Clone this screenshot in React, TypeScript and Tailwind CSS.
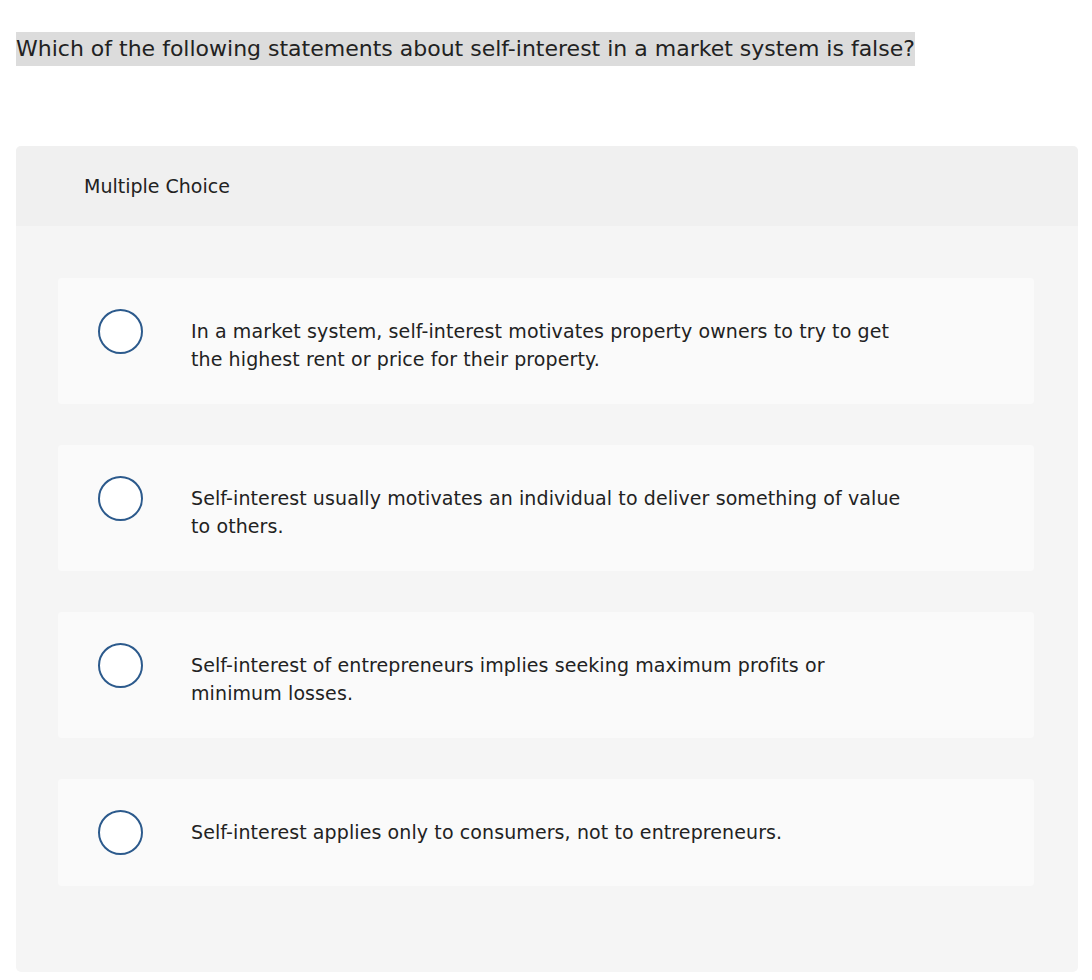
const options = [
  'In a market system, self-interest motivates property owners to try to get the highest rent or price for their property.',
  'Self-interest usually motivates an individual to deliver something of value to others.',
  'Self-interest of entrepreneurs implies seeking maximum profits or minimum losses.',
  'Self-interest applies only to consumers, not to entrepreneurs.',
];

function Radio() {
  return <div className="h-[45px] w-[45px] shrink-0 rounded-full border-2 border-[#2c5a8c] bg-white" />;
}

export default function App() {
  return (
    <div className="min-h-screen bg-white pt-[32px] pl-[16px] pr-[14px] font-['DejaVu_Sans',sans-serif] text-[#222]">
      <div className="inline-block bg-[#dcdcdc] text-[22px] leading-[34px]">
        Which of the following statements about self-interest in a market system is false?
      </div>

      <div className="mt-[80px] overflow-hidden rounded-[5px] bg-[#f5f5f5]">
        <div className="flex h-[80px] items-center bg-[#f0f0f0] pl-[68px] text-[19px]">Multiple Choice</div>
        <div className="flex flex-col gap-[41px] pl-[42px] pr-[44px] pb-[86px] pt-[52px]">
          {options.map((text, i) => (
            <div key={i} className="flex items-start rounded-[4px] bg-[#fafafa] py-[31px] pl-[40px] pr-[40px]">
              <Radio />
              <div className="ml-[48px] mt-[8px] max-w-[720px] text-[19px] leading-[28px] tracking-[0.1px]">{text}</div>
            </div>
          ))}
        </div>
      </div>
    </div>
  );
}
